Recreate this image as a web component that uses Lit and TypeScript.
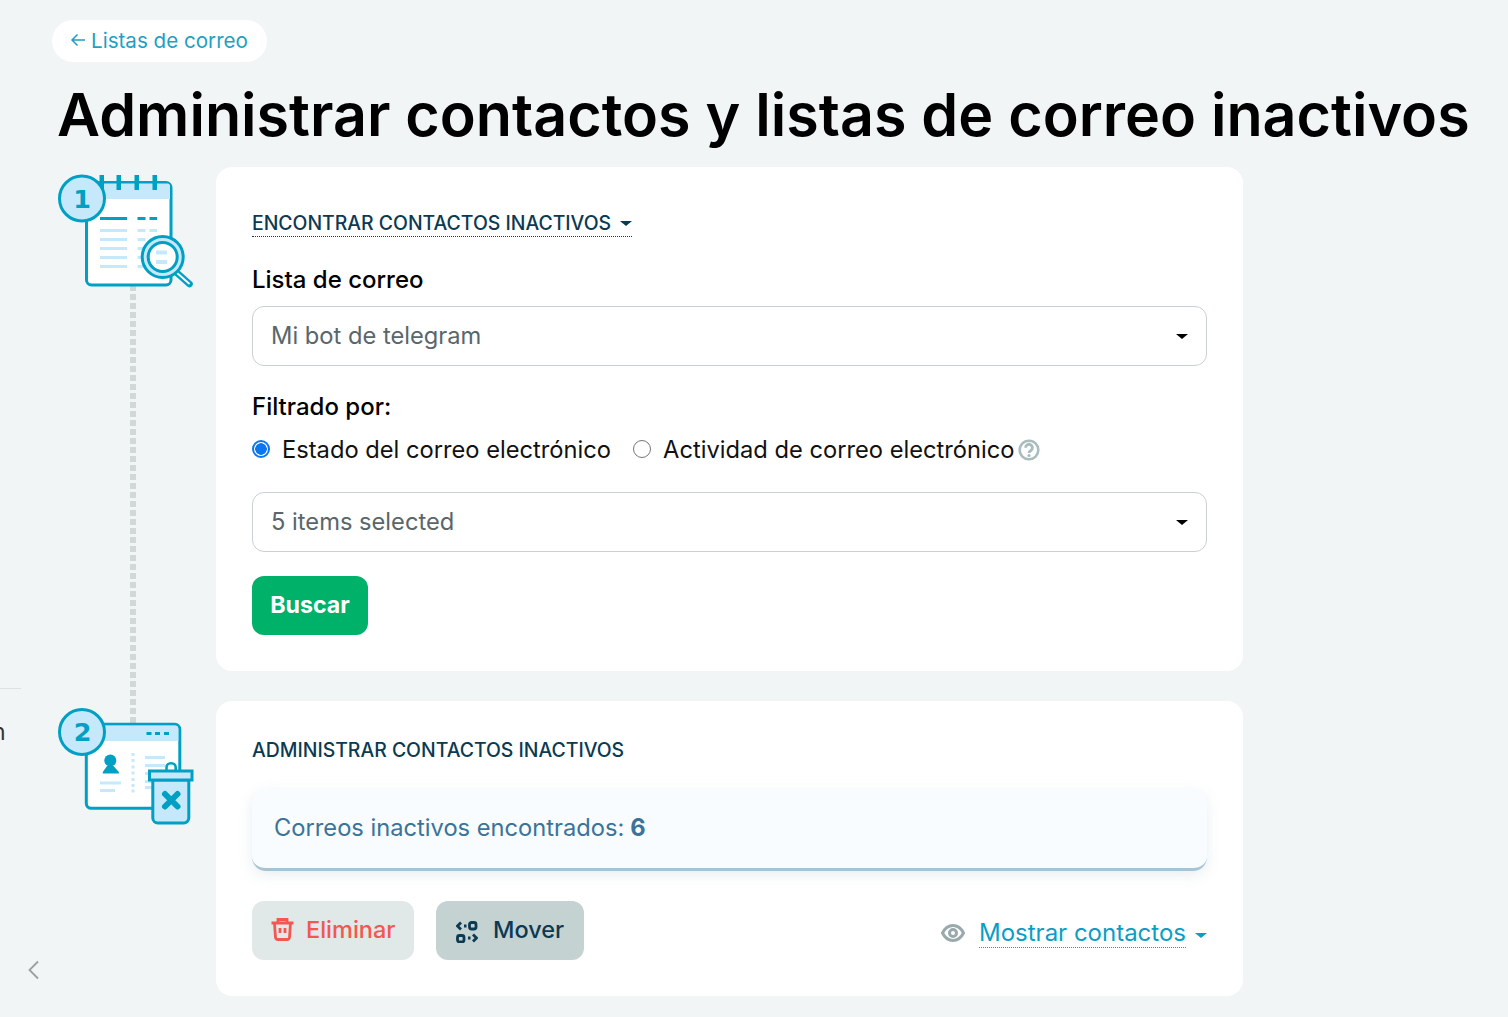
import { LitElement, html, css, svg } from "lit";
import { customElement } from "lit/decorators.js";

const T = "#00a0c4";
const L = "#c5e9fb";

const lightBars = (items: number[][]) =>
  items.map(([x, y, w, h]) => svg`<rect x=${x} y=${y} width=${w} height=${h ?? 3} fill=${L}/>`);

const iconFind = svg`
<svg class="step-icon" width="145" height="125" viewBox="52 167 145 125" aria-hidden="true">
  <rect x="86.500" y="182.500" width="84.500" height="102.500" rx="5" fill="#fff" stroke=${T} stroke-width="3"/>
  <path d="M88 199V186a2.500 2.500 0 0 1 2.500-2.500h77a2.500 2.500 0 0 1 2.500 2.500v13z" fill=${L}/>
  <g fill=${T}>
    <rect x="99.500" y="175" width="4.500" height="15"/><rect x="116.500" y="175" width="4.500" height="15"/>
    <rect x="134.500" y="175" width="4.500" height="15"/><rect x="152.500" y="175" width="4.500" height="15"/>
    <rect x="100" y="217" width="27" height="3"/><rect x="137.500" y="217" width="8" height="3"/><rect x="149.500" y="217" width="7.500" height="3"/>
  </g>
  ${lightBars([[100,229,27,3],[100,238,27,3],[100,247,27,3],[100,256,27,3],[100,265,27,3],[137.5,229,8,3],[149.5,229,7.5,3],[137.5,238,8,3],[137.5,247,8,3],[137.5,256,8,3],[137.5,265,8,3]])}
  <path d="M176 272l13.500 12" stroke=${T} stroke-width="6.500" stroke-linecap="round"/>
  <path d="M176.500 272.500l12.500 11" stroke="#fff" stroke-width="1.800" stroke-linecap="round"/>
  <circle cx="162.700" cy="257" r="20.500" fill=${L} stroke=${T} stroke-width="3"/>
  <circle cx="162.700" cy="257" r="14.500" fill="#fff" stroke=${T} stroke-width="3"/>
  <rect x="156" y="250.500" width="11" height="4" fill=${L}/><rect x="156" y="260" width="11" height="4" fill=${L}/>
  <circle cx="82" cy="198.500" r="22.500" fill=${L} stroke=${T} stroke-width="3"/>
  <text x="82" y="207.500" text-anchor="middle" class="num" fill=${T}>1</text>
</svg>`;

const iconManage = svg`
<svg class="step-icon" width="145" height="125" viewBox="52 701 145 125" aria-hidden="true">
  <rect x="86.300" y="724.300" width="93.500" height="84" rx="5" fill="#fff" stroke=${T} stroke-width="3"/>
  <path d="M87.800 741v-12a3.500 3.500 0 0 1 3.500-3.500h84.500a2.800 2.800 0 0 1 2.500 2.800V741z" fill=${L}/>
  <g fill=${T}>
    <rect x="146.500" y="732" width="5" height="3"/><rect x="155" y="732" width="5" height="3"/><rect x="164" y="732" width="5" height="3"/>
    <circle cx="110.300" cy="760.500" r="6"/>
    <path d="M107 766h6.500l5.300 6v1.500h-16v-1.500z"/>
  </g>
  ${lightBars([[100,781.5,21,3],[100,789,15,3],[131.5,753,3,3],[131.5,759,3,3],[131.5,765.5,3,3],[131.5,771.5,3,3],[131.5,778,3,3],[131.5,784,3,3],[131.5,789.5,3,3],[145,756,20,3],[145,764,20,3],[145,772,12,3],[145,780,8,3],[145,786,8,3]])}
  <path d="M166.500 770v-2.500a4.300 4.300 0 0 1 4.300-4.300h.6a4.300 4.300 0 0 1 4.300 4.300v2.500" fill="#fff" stroke=${T} stroke-width="2.600"/>
  <path d="M152.800 780h36v38a5 5 0 0 1-5 5h-26a5 5 0 0 1-5-5z" fill=${L} stroke=${T} stroke-width="3"/>
  <rect x="149.500" y="771" width="42.500" height="9" fill=${L} stroke=${T} stroke-width="3"/>
  <path d="M165 794l12.500 12.500M177.500 794L165 806.500" stroke=${T} stroke-width="6" stroke-linecap="round"/>
  <circle cx="82" cy="732" r="22.500" fill=${L} stroke=${T} stroke-width="3"/>
  <text x="82.500" y="741" text-anchor="middle" class="num" fill=${T}>2</text>
</svg>`;

@customElement("app-root")
export class AppRoot extends LitElement {
  static styles = css`
    :host {
      display: block;
      position: relative;
      height: 1017px;
      overflow: hidden;
      background: #f1f5f6;
      font-family: Inter, "Noto Sans", sans-serif;
      color: #000;
    }
    .page {
      padding: 20px 0 0 52px;
      box-sizing: border-box;
      width: 1508px;
    }
    .back {
      display: inline-flex;
      align-items: center;
      gap: 5px;
      box-sizing: border-box;
      height: 42px;
      width: 215px;
      padding: 0 0 2px 18px;
      border-radius: 21px;
      background: #fff;
      color: #1f9fc2;
      font-size: 20.600px;
      white-space: nowrap;
    }
    h1 {
      margin: 0 0 0 5px;
      height: 105px;
      line-height: 105px;
      font-size: 59.200px;
      font-weight: 600;
      white-space: nowrap;
    }
    .steps {
      display: flex;
      flex-direction: column;
      gap: 30px;
    }
    .step {
      display: flex;
    }
    .rail {
      width: 164px;
      flex: none;
      display: flex;
      flex-direction: column;
    }
    .step-icon {
      display: block;
      flex: none;
      position: relative;
      z-index: 1;
    }
    .num {
      font: 700 25.500px "DejaVu Sans", sans-serif;
    }
    .line {
      flex: 1;
      width: 6px;
      margin: -7px 0 -55px 78px;
      background: repeating-linear-gradient(#d0d8d8 0 6px, transparent 6px 9px);
    }
    .card {
      width: 1027px;
      box-sizing: border-box;
      background: #fff;
      border-radius: 16px;
      padding: 36px;
    }
    .card.one {
      height: 504px;
    }
    .card.two {
      height: 295px;
    }
    .sec {
      display: inline-flex;
      align-items: center;
      gap: 9px;
      color: #0b3a52;
      font-size: 19.400px;
      font-weight: 500;
      line-height: 26px;
      height: 26px;
      white-space: nowrap;
    }
    .one .sec {
      border-bottom: 1px dotted #0b3a52;
      margin-top: 7px;
    }
    .caret {
      width: 0;
      height: 0;
      border-left: 6px solid transparent;
      border-right: 6px solid transparent;
      border-top: 5.500px solid currentColor;
      flex: none;
    }
    .label {
      font-size: 24px;
      font-weight: 500;
      line-height: 30px;
    }
    .label.first {
      margin-top: 28px;
    }
    .select {
      display: flex;
      align-items: center;
      justify-content: space-between;
      box-sizing: border-box;
      height: 60px;
      border: 1px solid #c9d1d3;
      border-radius: 12px;
      padding: 0 18px 2px;
      color: #59666b;
      font-size: 23.700px;
      margin-top: 11px;
    }
    .select .caret {
      color: #000;
      margin-top: 2px;
    }
    .label.second {
      margin-top: 26px;
    }
    .radios {
      display: flex;
      align-items: center;
      box-sizing: border-box;
      height: 30px;
      padding-bottom: 2px;
      margin-top: 13px;
      font-size: 23.700px;
      color: #111;
      white-space: nowrap;
    }
    .radio {
      width: 18px;
      height: 18px;
      box-sizing: border-box;
      border-radius: 50%;
      margin-right: 12px;
      flex: none;
    }
    .radio.on {
      border: 2px solid #0b76f0;
      background: radial-gradient(circle, #0b76f0 0 5.500px, #fff 6px);
    }
    .radio.off {
      border: 1.500px solid #767676;
      background: #fff;
      margin-left: 22px;
    }
    .help {
      margin: 2px 0 0 4px;
      flex: none;
    }
    .select.items {
      margin-top: 27px;
    }
    .search {
      display: flex;
      align-items: center;
      justify-content: center;
      box-sizing: border-box;
      width: 116px;
      height: 59px;
      padding-bottom: 2px;
      margin-top: 24px;
      border-radius: 12px;
      background: #00b16a;
      color: #fff;
      font-size: 23.200px;
      font-weight: 700;
    }
    .alert {
      box-sizing: border-box;
      height: 82px;
      margin-top: 26px;
      padding: 0 22px 2px;
      display: flex;
      align-items: center;
      gap: 6px;
      background: #f8fcff;
      border-radius: 14px;
      border-bottom: 3px solid #a7c4d5;
      box-shadow: 0 4px 14px rgba(120, 150, 170, 0.16);
      color: #3b7399;
      font-size: 23.700px;
    }
    .actions {
      display: flex;
      align-items: center;
      margin-top: 30px;
    }
    .btn {
      display: flex;
      align-items: center;
      box-sizing: border-box;
      height: 59px;
      padding-bottom: 2px;
      border-radius: 12px;
      font-size: 23.500px;
      font-weight: 500;
      white-space: nowrap;
    }
    .btn svg {
      flex: none;
    }
    .del {
      width: 162px;
      padding-left: 18px;
      gap: 11px;
      background: #e0e8e8;
      color: #f4574f;
    }
    .move {
      width: 148px;
      padding-left: 20px;
      gap: 15px;
      margin-left: 22px;
      background: #c5d2d2;
      color: #0b3a52;
    }
    .move svg {
      margin-top: 4px;
    }
    .show {
      margin-left: auto;
      display: flex;
      align-items: center;
      color: #0a9ec6;
      font-size: 24px;
      padding-top: 5px;
    }
    .show .eye {
      margin-right: 14px;
    }
    .show .txt {
      border-bottom: 1px dotted #0a9ec6;
      line-height: 29px;
      margin-right: 9px;
    }
    .show .caret {
      margin-top: 4px;
    }
    .side-rule {
      position: absolute;
      left: 0;
      top: 688px;
      width: 21px;
      height: 1px;
      background: #dde3e4;
    }
    .side-text {
      position: absolute;
      left: -8px;
      top: 718px;
      font-size: 23px;
      line-height: 28px;
      color: #333;
    }
    .collapse {
      position: absolute;
      left: 27px;
      top: 960px;
    }
  `;

  render() {
    return html`
      <div class="page">
        <div class="back">
          <svg width="16" height="16" viewBox="0 0 16 16" fill="none" stroke="#1f9fc2" stroke-width="1.500">
            <path d="M15 8H2M7.500 2.500L2 8l5.500 5.500" />
          </svg>
          Listas de correo
        </div>
        <h1>Administrar contactos y listas de correo inactivos</h1>
        <div class="steps">
          <div class="step">
            <div class="rail">${iconFind}<div class="line"></div></div>
            <section class="card one">
              <div class="sec">ENCONTRAR CONTACTOS INACTIVOS <span class="caret"></span></div>
              <div class="label first">Lista de correo</div>
              <div class="select">Mi bot de telegram <span class="caret"></span></div>
              <div class="label second">Filtrado por:</div>
              <div class="radios">
                <span class="radio on"></span>Estado del correo electrónico
                <span class="radio off"></span>Actividad de correo electrónico
                <svg class="help" width="22" height="22" viewBox="0 0 22 22" fill="none">
                  <circle cx="11" cy="11" r="9.300" stroke="#a9bcbe" stroke-width="2.600" />
                  <path d="M7.600 8.800a3.400 3.400 0 1 1 5.300 2.700c-1.200.7-1.900 1.100-1.900 2.400" stroke="#a9bcbe" stroke-width="2.800" />
                  <circle cx="11" cy="16.500" r="1.600" fill="#a9bcbe" />
                </svg>
              </div>
              <div class="select items">5 items selected <span class="caret"></span></div>
              <div class="search">Buscar</div>
            </section>
          </div>
          <div class="step">
            <div class="rail">${iconManage}</div>
            <section class="card two">
              <div class="sec">ADMINISTRAR CONTACTOS INACTIVOS</div>
              <div class="alert"><span>Correos inactivos encontrados:</span> <b>6</b></div>
              <div class="actions">
                <div class="btn del">
                  <svg width="25" height="25" viewBox="0 0 25 25" fill="none" stroke="#f4574f" stroke-width="2.800">
                    <path d="M1.500 6h22M8 6V2.500h9V6M4.500 6l1 14.500a2.500 2.500 0 0 0 2.500 2h9a2.500 2.500 0 0 0 2.500-2l1-14.500M10 11v5M15 11v5" />
                  </svg>
                  Eliminar
                </div>
                <div class="btn move">
                  <svg width="22" height="22" viewBox="0 0 22 22" fill="none" stroke="#0b3a52" stroke-width="2.800">
                    <rect x="13.500" y="1.500" width="6.500" height="6.500" rx="2" />
                    <rect x="1.500" y="14.500" width="6.500" height="6.500" rx="2" />
                    <path d="M5 1.500L1.500 5 5 8.500M8 5h2.500M17 13.500l3.500 3.500-3.500 3.500M12 17h2.500" />
                  </svg>
                  Mover
                </div>
                <div class="show">
                  <svg class="eye" width="24" height="20" viewBox="0 0 24 20" fill="none" stroke="#9aa9ab" stroke-width="3">
                    <path d="M1.500 10C4 5 7.500 2.500 12 2.500S20 5 22.500 10C20 15 16.500 17.500 12 17.500S4 15 1.500 10z" />
                    <circle cx="12" cy="10" r="3.500" />
                  </svg>
                  <span class="txt">Mostrar contactos</span>
                  <span class="caret"></span>
                </div>
              </div>
            </section>
          </div>
        </div>
      </div>
      <div class="side-rule"></div>
      <div class="side-text">n</div>
      <svg class="collapse" width="14" height="20" viewBox="0 0 14 20" fill="none" stroke="#9a9fa1" stroke-width="1.800">
        <path d="M11 1.500L2.500 10l8.500 8.500" />
      </svg>
    `;
  }
}
